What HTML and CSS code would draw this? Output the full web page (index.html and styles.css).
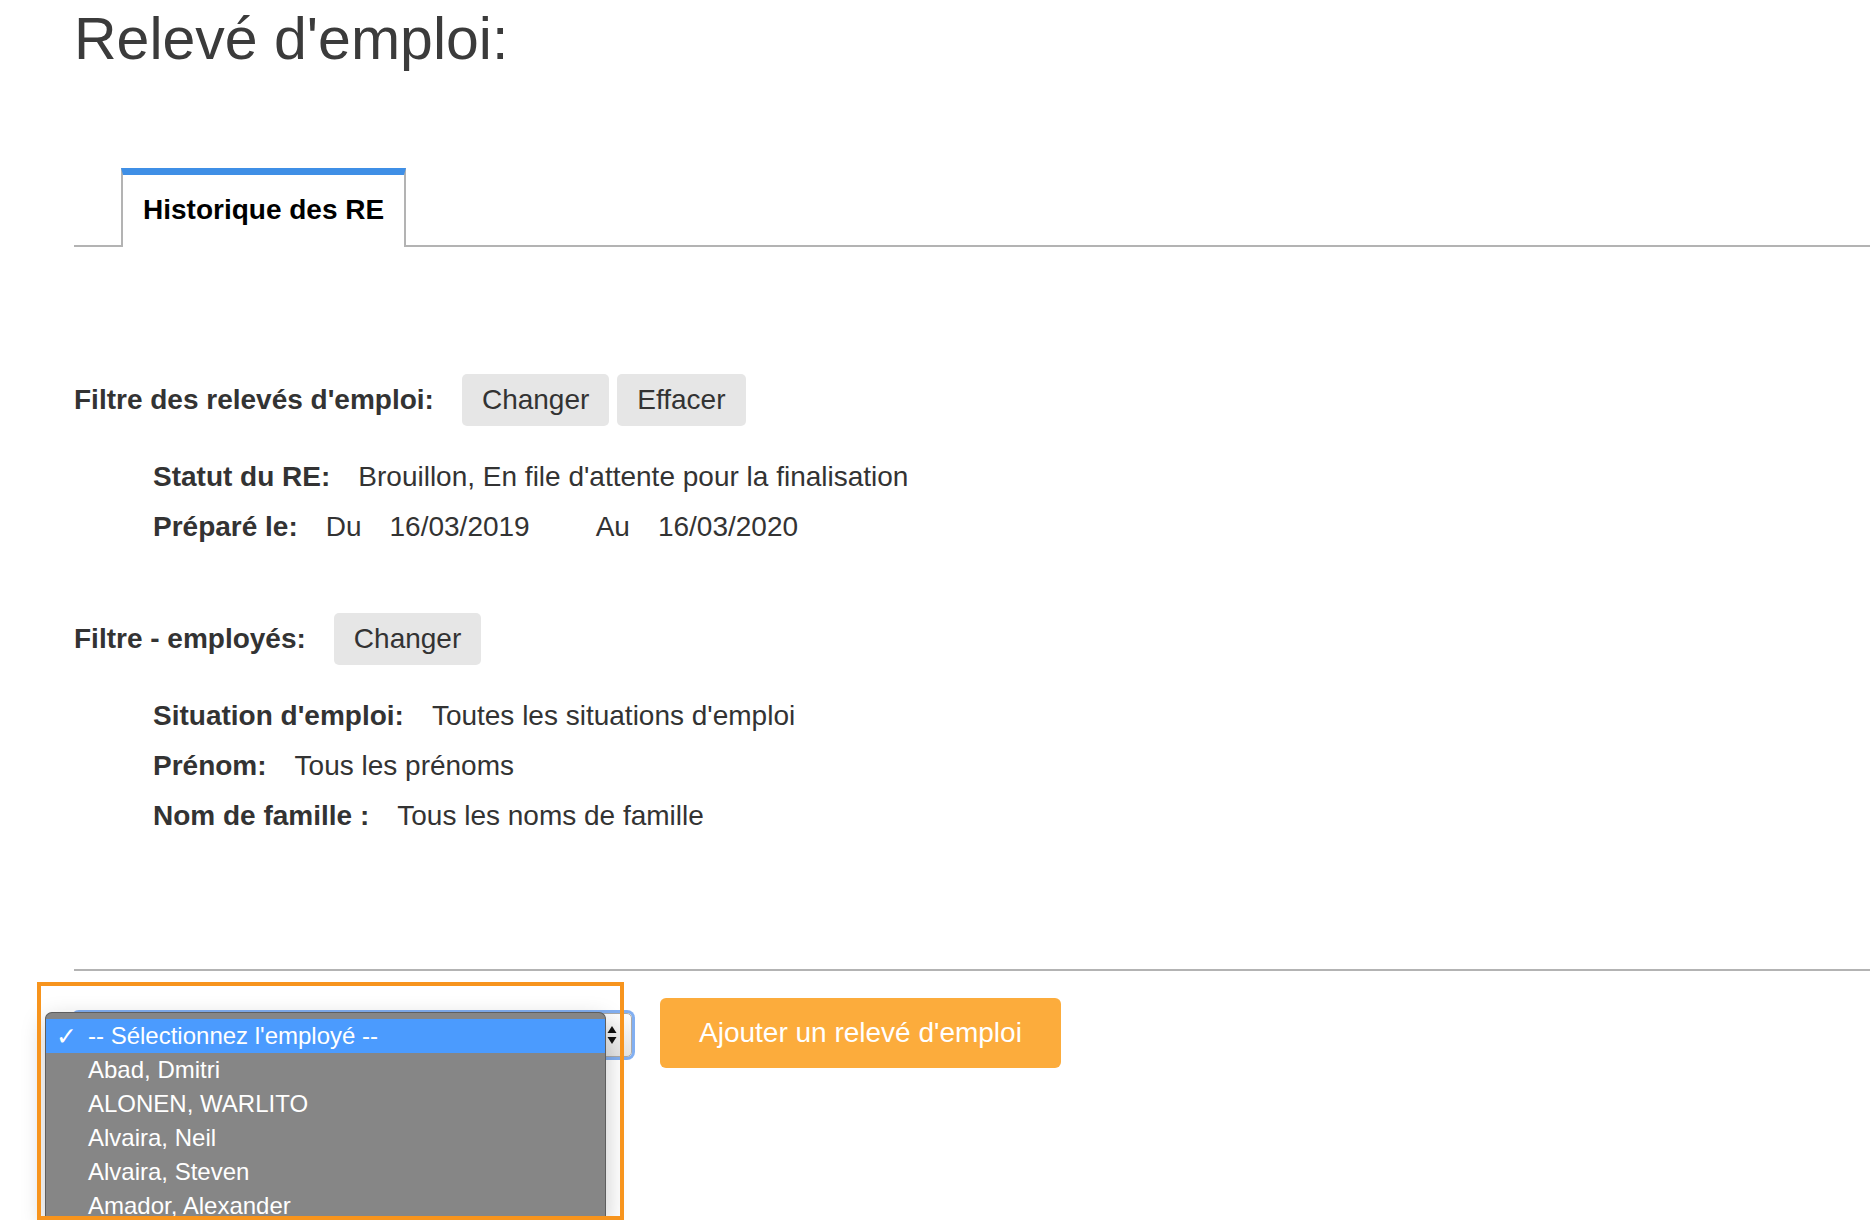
FILE: index.html
```html
<!DOCTYPE html>
<html lang="fr">
<head>
<meta charset="UTF-8">
<meta name="viewport" content="width=device-width, initial-scale=1.0">
<title>Relevé d'emploi</title>
<link rel="stylesheet" href="styles.css">
</head>
<body>
<div class="page">
    <h1 class="page-title">Relevé d'emploi:</h1>

    <div class="tabs">
        <div class="tab active">Historique des RE</div>
    </div>

    <div class="filters">
        <div class="filter-group">
            <div class="filter-head">
                <span class="filter-label">Filtre des relevés d'emploi:</span>
                <div class="btn-group">
                    <button class="btn">Changer</button>
                    <button class="btn">Effacer</button>
                </div>
            </div>
            <div class="filter-rows">
                <div class="filter-row">
                    <b>Statut du RE:</b>
                    <span>Brouillon, En file d'attente pour la finalisation</span>
                </div>
                <div class="filter-row">
                    <b>Préparé le:</b>
                    <span>Du</span>
                    <span>16/03/2019</span>
                    <span class="date-to">Au</span>
                    <span>16/03/2020</span>
                </div>
            </div>
        </div>

        <div class="filter-group">
            <div class="filter-head">
                <span class="filter-label">Filtre - employés:</span>
                <div class="btn-group">
                    <button class="btn">Changer</button>
                </div>
            </div>
            <div class="filter-rows">
                <div class="filter-row">
                    <b>Situation d'emploi:</b>
                    <span>Toutes les situations d'emploi</span>
                </div>
                <div class="filter-row">
                    <b>Prénom:</b>
                    <span>Tous les prénoms</span>
                </div>
                <div class="filter-row">
                    <b>Nom de famille :</b>
                    <span>Tous les noms de famille</span>
                </div>
            </div>
        </div>
    </div>

    <hr class="divider">

    <div class="actions">
        <div class="select-wrap">
            <div class="select-box">
                <svg class="select-arrows" width="10" height="20" viewBox="0 0 10 20">
                    <path d="M5 1 L9.5 8 L0.5 8 Z" fill="#111"/>
                    <path d="M0.5 12 L9.5 12 L5 19 Z" fill="#111"/>
                </svg>
            </div>
            <!-- open popup of the employee select -->
            <ul class="select-menu">
                <li class="selected"><span class="check">✓</span>-- Sélectionnez l'employé --</li>
                <li>Abad, Dmitri</li>
                <li>ALONEN, WARLITO</li>
                <li>Alvaira, Neil</li>
                <li>Alvaira, Steven</li>
                <li>Amador, Alexander</li>
            </ul>
            <div class="highlight-box"></div>
        </div>
        <button class="btn-add">Ajouter un relevé d'emploi</button>
    </div>
</div>
</body>
</html>
```

FILE: styles.css
```css
html {
    overflow: hidden;
}

body {
    margin: 0;
    padding: 0;
    font-family: "Liberation Sans", Arial, Helvetica, sans-serif;
    color: #333;
    background-color: #fff;
}

.page {
    min-height: 100vh;
    box-sizing: border-box;
    padding: 5px 0 0 74px;
}

.page-title {
    margin: 0;
    font-size: 59px;
    line-height: 68px;
    font-weight: normal;
    color: #3b3b3b;
}

/* tabs */
.tabs {
    display: flex;
    margin-top: 95px;
    padding-left: 47px;
    border-bottom: 2px solid #b3b3b3;
}

.tab {
    margin-bottom: -2px;
    padding: 19px 20px 21px;
    border: 2px solid #b3b3b3;
    border-top: 7px solid #3f8fe6;
    border-bottom: none;
    background-color: #fff;
    font-size: 28px;
    line-height: 32px;
    font-weight: bold;
    color: #000;
}

/* filters */
.filters {
    margin-top: 127px;
}

.filter-group + .filter-group {
    margin-top: 70px;
}

.filter-head {
    display: flex;
    align-items: center;
    gap: 28px;
}

.filter-label {
    font-size: 28px;
    line-height: 32px;
    font-weight: bold;
}

.btn-group {
    display: flex;
    gap: 8px;
}

.btn {
    padding: 10px 20px;
    border: none;
    border-radius: 5px;
    background-color: #e6e6e6;
    color: #333;
    font-family: inherit;
    font-size: 28px;
    line-height: 32px;
    cursor: pointer;
}

.filter-rows {
    display: flex;
    flex-direction: column;
    gap: 18px;
    margin-top: 35px;
    padding-left: 79px;
    font-size: 28px;
    line-height: 32px;
}

.filter-row {
    display: flex;
    gap: 28px;
}

.date-to {
    margin-left: 38px;
}

.divider {
    height: 0;
    margin: 137px 0 0;
    border: none;
    border-top: 2px solid #b3b3b3;
}

/* bottom actions */
.actions {
    display: flex;
    align-items: flex-start;
    gap: 28px;
    margin-top: 27px;
}

.select-wrap {
    position: relative;
    width: 558px;
    margin-top: 15px;
}

.select-box {
    position: relative;
    height: 44px;
    box-sizing: border-box;
    border: 1px solid #a9a9a9;
    border-radius: 5px;
    background: linear-gradient(#fdfdfd, #e4e4e4);
    box-shadow: 0 0 0 3px rgba(88, 148, 236, 0.75);
}

.select-arrows {
    position: absolute;
    right: 14px;
    top: 11px;
}

.select-menu {
    position: absolute;
    left: -29px;
    top: -1px;
    z-index: 2;
    width: 561px;
    height: 206px;
    box-sizing: border-box;
    margin: 0;
    padding: 6px 0 0;
    overflow: hidden;
    list-style: none;
    border: 1px solid #5e5e5e;
    border-bottom: none;
    border-radius: 7px 7px 0 0;
    background-color: #868686;
    box-shadow: 0 8px 24px rgba(0, 0, 0, 0.22);
    color: #fff;
    font-size: 24px;
}

.select-menu li {
    position: relative;
    height: 34px;
    padding-left: 42px;
    line-height: 34px;
    white-space: nowrap;
}

.select-menu li.selected {
    background-color: #4b9bfe;
}

.check {
    position: absolute;
    left: 10px;
    top: 1px;
    font-family: "DejaVu Sans", sans-serif;
    font-size: 25px;
    font-weight: bold;
}

.highlight-box {
    position: absolute;
    left: -37px;
    top: -31px;
    z-index: 3;
    width: 587px;
    height: 238px;
    box-sizing: border-box;
    border: 4px solid #f7941d;
    pointer-events: none;
}

.btn-add {
    padding: 19px 39px;
    border: none;
    border-radius: 6px;
    background-color: #fcac3c;
    color: #fff;
    font-family: inherit;
    font-size: 28px;
    line-height: 32px;
    cursor: pointer;
}
```
